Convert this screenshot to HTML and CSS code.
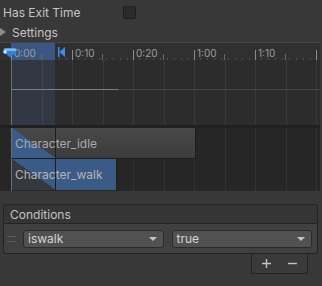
FILE: index.html
```html
<!DOCTYPE html>
<html lang="en">
  <head>
    <meta charset="UTF-8" />
    <meta name="viewport" content="width=device-width, initial-scale=1.0" />
    <title>Transition Inspector</title>
    <link rel="stylesheet" href="styles.css">
  </head>
  <body>
    <div class="field">
      <span class="field-label">Has Exit Time</span>
      <span class="checkbox"></span>
    </div>

    <div class="foldout">
      <span class="foldout-arrow"></span>
      <span>Settings</span>
    </div>

    <div class="timeline">
      <div class="ruler">
        <div class="ruler-seg"><span class="tick"></span><span class="tick-label">0:00</span></div>
        <div class="ruler-seg"><span class="tick"></span><span class="tick-label">0:10</span></div>
        <div class="ruler-seg"><span class="tick"></span><span class="tick-label">0:20</span></div>
        <div class="ruler-seg"><span class="tick"></span><span class="tick-label">1:00</span></div>
        <div class="ruler-seg"><span class="tick"></span><span class="tick-label">1:10</span></div>
        <div class="ruler-seg"><span class="tick"></span></div>

        <!-- time cursor -->
        <svg class="playhead" width="14" height="11" viewBox="0 0 14 11">
          <path d="M2 1 H12 Q13.5 1 13.5 2.5 V5 L7 10.5 L0.5 5 V2.5 Q0.5 1 2 1 Z" fill="#2f7fd8" />
          <path d="M2 1.5 H12 Q13 1.5 13 2.5 V4 H1 V2.5 Q1 1.5 2 1.5 Z" fill="#7fb6f0" />
          <circle cx="2" cy="5" r="1.8" fill="#cfe3fb" />
        </svg>
        <!-- transition end marker -->
        <svg class="end-marker" width="7" height="10" viewBox="0 0 7 10">
          <rect x="0" y="0" width="1.5" height="10" fill="#3d8df0" />
          <path d="M1.5 5 L7 0 V10 Z" fill="#3d8df0" />
        </svg>
      </div>

      <div class="curves">
        <div class="curve"></div>
      </div>

      <div class="clips">
        <div class="clip clip-idle">Character_idle</div>
        <div class="clip clip-walk">Character_walk</div>
      </div>
    </div>

    <div class="conditions">
      <div class="cond-header">Conditions</div>
      <div class="cond-row">
        <span class="drag-handle"></span>
        <div class="dropdown"><span>iswalk</span><span class="dropdown-arrow"></span></div>
        <div class="dropdown"><span>true</span><span class="dropdown-arrow"></span></div>
      </div>
      <div class="cond-footer">
        <svg width="9" height="9" viewBox="0 0 9 9">
          <path d="M4.5 0 V9 M0 4.5 H9" stroke="#c2c2c2" stroke-width="1.4" />
        </svg>
        <svg width="9" height="9" viewBox="0 0 9 9">
          <path d="M0 4.5 H9" stroke="#c2c2c2" stroke-width="1.4" />
        </svg>
      </div>
    </div>
  </body>
</html>
```

FILE: styles.css
```css
body {
  margin: 0;
  width: 322px;
  height: 286px;
  overflow: hidden;
  background: #383838;
  font-family: Inter, "Liberation Sans", sans-serif;
  font-size: 12px;
  color: #c4c4c4;
}
.field {
  display: flex;
  align-items: center;
  height: 20px;
  padding: 2px 0 0 3px;
}
.field-label {
  width: 120px;
}
.checkbox {
  width: 11px;
  height: 11px;
  border: 1px solid #1f1f1f;
  border-radius: 2px;
  background: #2a2a2a;
}
.foldout {
  display: flex;
  align-items: center;
  gap: 6px;
  height: 20px;
}
.foldout-arrow {
  width: 0;
  height: 0;
  border-left: 6px solid #8c8c8c;
  border-top: 4px solid transparent;
  border-bottom: 4px solid transparent;
}
.timeline {
  width: 320px;
  overflow: hidden;
}
.ruler {
  position: relative;
  display: flex;
  height: 17px;
  padding-left: 11px;
  overflow: hidden;
  border-top: 1px solid #454545;
  background: linear-gradient(to right, #303030 11px, #3a5784 11px 55px, #303030 55px);
}
.ruler-seg {
  flex: 0 0 61px;
  display: flex;
  align-items: flex-end;
  background:
    linear-gradient(#6a6a6a, #6a6a6a) 30px 100% / 1px 6px no-repeat,
    repeating-linear-gradient(to right, transparent 0 6px, #505050 6px 7px) 0 100% / 100% 2px no-repeat;
}
.tick {
  width: 1px;
  height: 10px;
  background: #8c8c8c;
}
.tick-label {
  align-self: flex-start;
  margin: 4px 0 0 2px;
  font-size: 10px;
  line-height: 12px;
  color: #9c9c9c;
}
.playhead {
  position: absolute;
  left: 3px;
  top: 4px;
}
.end-marker {
  position: absolute;
  left: 58px;
  top: 4px;
}
.curves {
  height: 65px;
  overflow: hidden;
  background:
    linear-gradient(to right, transparent 11px, #6e6e6e 11px 12px, transparent 12px),
    linear-gradient(to right, transparent 12px, rgba(80, 130, 210, 0.14) 12px 55px, transparent 55px),
    repeating-linear-gradient(to right, transparent 0 11px, #3a3a3a 11px 12px, transparent 12px 30.5px),
    #2c2c2c;
}
.curve {
  margin-top: 29px;
  height: 1px;
  background: linear-gradient(to right, transparent 11px, #7e7e7e 11px 118px, #454545 118px);
}
.clips {
  display: flex;
  flex-direction: column;
  height: 63px;
  border-top: 3px solid #202020;
  background:
    linear-gradient(to right, transparent 11px, #6e6e6e 11px 12px, transparent 12px),
    repeating-linear-gradient(to right, transparent 0 11px, #333333 11px 12px, transparent 12px 30.5px),
    #262626;
}
.clip {
  box-sizing: border-box;
  display: flex;
  align-items: center;
  height: 31px;
  margin-left: 11px;
  padding-left: 3px;
  border-left: 1px solid #6e6e6e;
  color: #a9a9a9;
}
.clip-idle {
  width: 185px;
  border-right: 1px solid #1c1c1c;
  border-bottom: 1px solid #1c1c1c;
  background:
    linear-gradient(to right, transparent 43px, #1e1e1e 43px 44px, transparent 44px),
    linear-gradient(to top right, #3b5b88 50%, transparent 50%) 0 0 / 44px 100% no-repeat,
    linear-gradient(#484848, #3c3c3c);
}
.clip-walk {
  width: 106px;
  border-right: 1px solid #1c1c1c;
  color: #b4b4b4;
  background:
    linear-gradient(to right, transparent 43px, #1e1e1e 43px 44px, transparent 44px),
    linear-gradient(to top right, #34383f 50%, transparent 50%) 0 0 / 44px 100% no-repeat,
    #3b5b87;
}
.conditions {
  display: flex;
  flex-direction: column;
  margin: 13px 4px 0 3px;
}
.cond-header {
  display: flex;
  align-items: center;
  height: 18px;
  padding-left: 6px;
  border: 1px solid #242424;
  border-radius: 3px 3px 0 0;
  background: #353535;
}
.cond-row {
  display: flex;
  align-items: center;
  gap: 7px;
  height: 29px;
  padding: 0 5px 0 3px;
  border: 1px solid #242424;
  border-top: none;
  border-radius: 0 0 3px 3px;
  background: #404040;
}
.drag-handle {
  flex: 0 0 9px;
  height: 4px;
  border-top: 1px solid #5a5a5a;
  border-bottom: 1px solid #5a5a5a;
}
.dropdown {
  flex: 1;
  box-sizing: border-box;
  display: flex;
  align-items: center;
  justify-content: space-between;
  height: 18px;
  padding: 0 6px 0 4px;
  border: 1px solid #2a2a2a;
  border-radius: 3px;
  background: #515151;
  color: #d4d4d4;
}
.dropdown + .dropdown {
  margin-left: 1px;
}
.dropdown-arrow {
  width: 0;
  height: 0;
  border-top: 4px solid #c4c4c4;
  border-left: 4px solid transparent;
  border-right: 4px solid transparent;
}
.cond-footer {
  align-self: flex-end;
  display: flex;
  align-items: center;
  justify-content: center;
  gap: 17px;
  width: 55px;
  height: 19px;
  margin-right: 10px;
  border: 1px solid #242424;
  border-top: none;
  border-radius: 0 0 3px 3px;
  background: #3a3a3a;
}
```
